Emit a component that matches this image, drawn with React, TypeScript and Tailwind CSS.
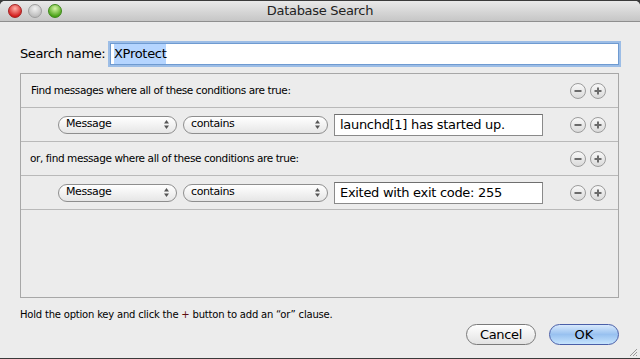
import type { ReactNode } from 'react'

const FONT = { fontFamily: '"DejaVu Sans", "Noto Sans", sans-serif' }

function Light({ from, to, border }: { from: string; to: string; border: string }) {
  return (
    <span
      className="block w-[14px] h-[14px] rounded-full border"
      style={{ background: `radial-gradient(circle at 50% 30%, ${from} 0%, ${to} 75%)`, borderColor: border }}
    />
  )
}

function RoundButton({ kind }: { kind: 'minus' | 'plus' }) {
  return (
    <span className="w-[16px] h-[16px] rounded-full border border-[#9c9c9c] bg-gradient-to-b from-[#f8f8f8] to-[#dadada] flex items-center justify-center">
      <svg width="10" height="10" viewBox="0 0 10 10">
        <path d="M1.5 5h7" stroke="#6b6b6b" strokeWidth="2" />
        {kind === 'plus' && <path d="M5 1.5v7" stroke="#6b6b6b" strokeWidth="2" />}
      </svg>
    </span>
  )
}

function Controls() {
  return (
    <div className="flex items-center gap-[4px] mr-[12px]">
      <RoundButton kind="minus" />
      <RoundButton kind="plus" />
    </div>
  )
}

function Popup({ label, width }: { label: string; width: string }) {
  return (
    <div
      className={`${width} h-[18px] rounded-full border border-[#8e8e8e] bg-gradient-to-b from-[#ffffff] to-[#e6e6e6] flex items-center pl-[7px] pr-[6px] text-[11px] tracking-[-0.4px] text-black`}
    >
      <span className="flex-1">{label}</span>
      <svg width="7" height="11" viewBox="0 0 7 11">
        <path d="M3.5 1L6 4.5H1z" fill="#555" />
        <path d="M3.5 10L6 6.5H1z" fill="#555" />
      </svg>
    </div>
  )
}

function Row({ children }: { children: ReactNode }) {
  return (
    <div className="h-[34px] flex items-center border-b border-[#b9b9b9]">
      <div className="flex-1 flex items-center">{children}</div>
      <Controls />
    </div>
  )
}

function Condition({ value }: { value: string }) {
  return (
    <div className="flex items-center pl-[37px] gap-[6px]">
      <Popup label="Message" width="w-[119px]" />
      <Popup label="contains" width="w-[145px]" />
      <div className="w-[209px] h-[22px] bg-white border border-[#8a8a8a] border-t-[#6f6f6f] flex items-center pl-[5px] text-[13px] tracking-[-0.3px] text-black">
        {value}
      </div>
    </div>
  )
}

export default function App() {
  return (
    <div className="w-[640px] h-[359px] bg-[#3a3a3a] overflow-hidden" style={FONT}>
      <div className="h-[357px] mt-[1px] bg-[#ececec] flex flex-col rounded-t-[5px] overflow-hidden">
        {/* Title bar */}
        <div className="h-[21px] bg-gradient-to-b from-[#e9e9e9] to-[#c6c6c6] border-b border-[#8f8f8f] flex items-center relative">
          <div className="flex items-center gap-[6px] pl-[8px]">
            <Light from="#ffb0a8" to="#d21c1c" border="#a32020" />
            <Light from="#f2f2f2" to="#bdbdbd" border="#9d9d9d" />
            <Light from="#d6f5a5" to="#4aa217" border="#3c8718" />
          </div>
          <div className="absolute inset-0 flex items-center justify-center text-[13px] tracking-[-0.3px] text-[#222]">
            Database Search
          </div>
        </div>

        {/* Search name */}
        <div className="flex items-center mt-[21px] pl-[20px] pr-[21px]">
          <span className="text-[13px] tracking-[-0.4px] text-black w-[90px] whitespace-nowrap">Search name:</span>
          <div className="flex-1 h-[22px] bg-white border border-[#6f9bd1] shadow-[0_0_0_2px_#9cbde6] flex items-center pl-[3px] text-[13px] tracking-[-0.3px] text-black">
            <span className="bg-[#b5d5ff]">XProtect</span>
          </div>
        </div>

        {/* Predicate editor */}
        <div className="mt-[8px] ml-[20px] mr-[21px] h-[225px] border border-[#a7a7a7] bg-[#ececec]">
          <Row>
            <span className="pl-[10px] text-[10.5px] tracking-[-0.4px] text-black">Find messages where all of these conditions are true:</span>
          </Row>
          <Row>
            <Condition value="launchd[1] has started up." />
          </Row>
          <Row>
            <span className="pl-[9px] text-[10.5px] tracking-[-0.4px] text-black">or, find message where all of these conditions are true:</span>
          </Row>
          <Row>
            <Condition value="Exited with exit code: 255" />
          </Row>
        </div>

        {/* Hint and buttons */}
        <div className="pl-[20px] mt-[9px] text-[10px] tracking-[-0.2px] text-black">
          Hold the option key and click the <span className="text-[#5c0f0f]">+</span> button to add an “or” clause.
        </div>
        <div className="flex justify-end gap-[13px] pr-[21px] mt-[2px]">
          <button className="w-[70px] h-[21px] rounded-full border border-[#7a7a7a] bg-gradient-to-b from-[#ffffff] to-[#e2e2e2] text-[13px] tracking-[-0.3px] text-black">
            Cancel
          </button>
          <button className="w-[70px] h-[21px] rounded-full border border-[#4a5fa8] bg-gradient-to-b from-[#d8e9fc] via-[#98c1f0] to-[#c6e4fd] text-[13px] text-black">
            OK
          </button>
        </div>
        <div className="flex-1 flex items-end justify-end pr-[2px] pb-[1px]">
          <svg width="10" height="10" viewBox="0 0 10 10">
            <path d="M9 2L2 9M9 5L5 9M9 8L8 9" stroke="#9a9a9a" strokeWidth="1" />
          </svg>
        </div>
      </div>
    </div>
  )
}
